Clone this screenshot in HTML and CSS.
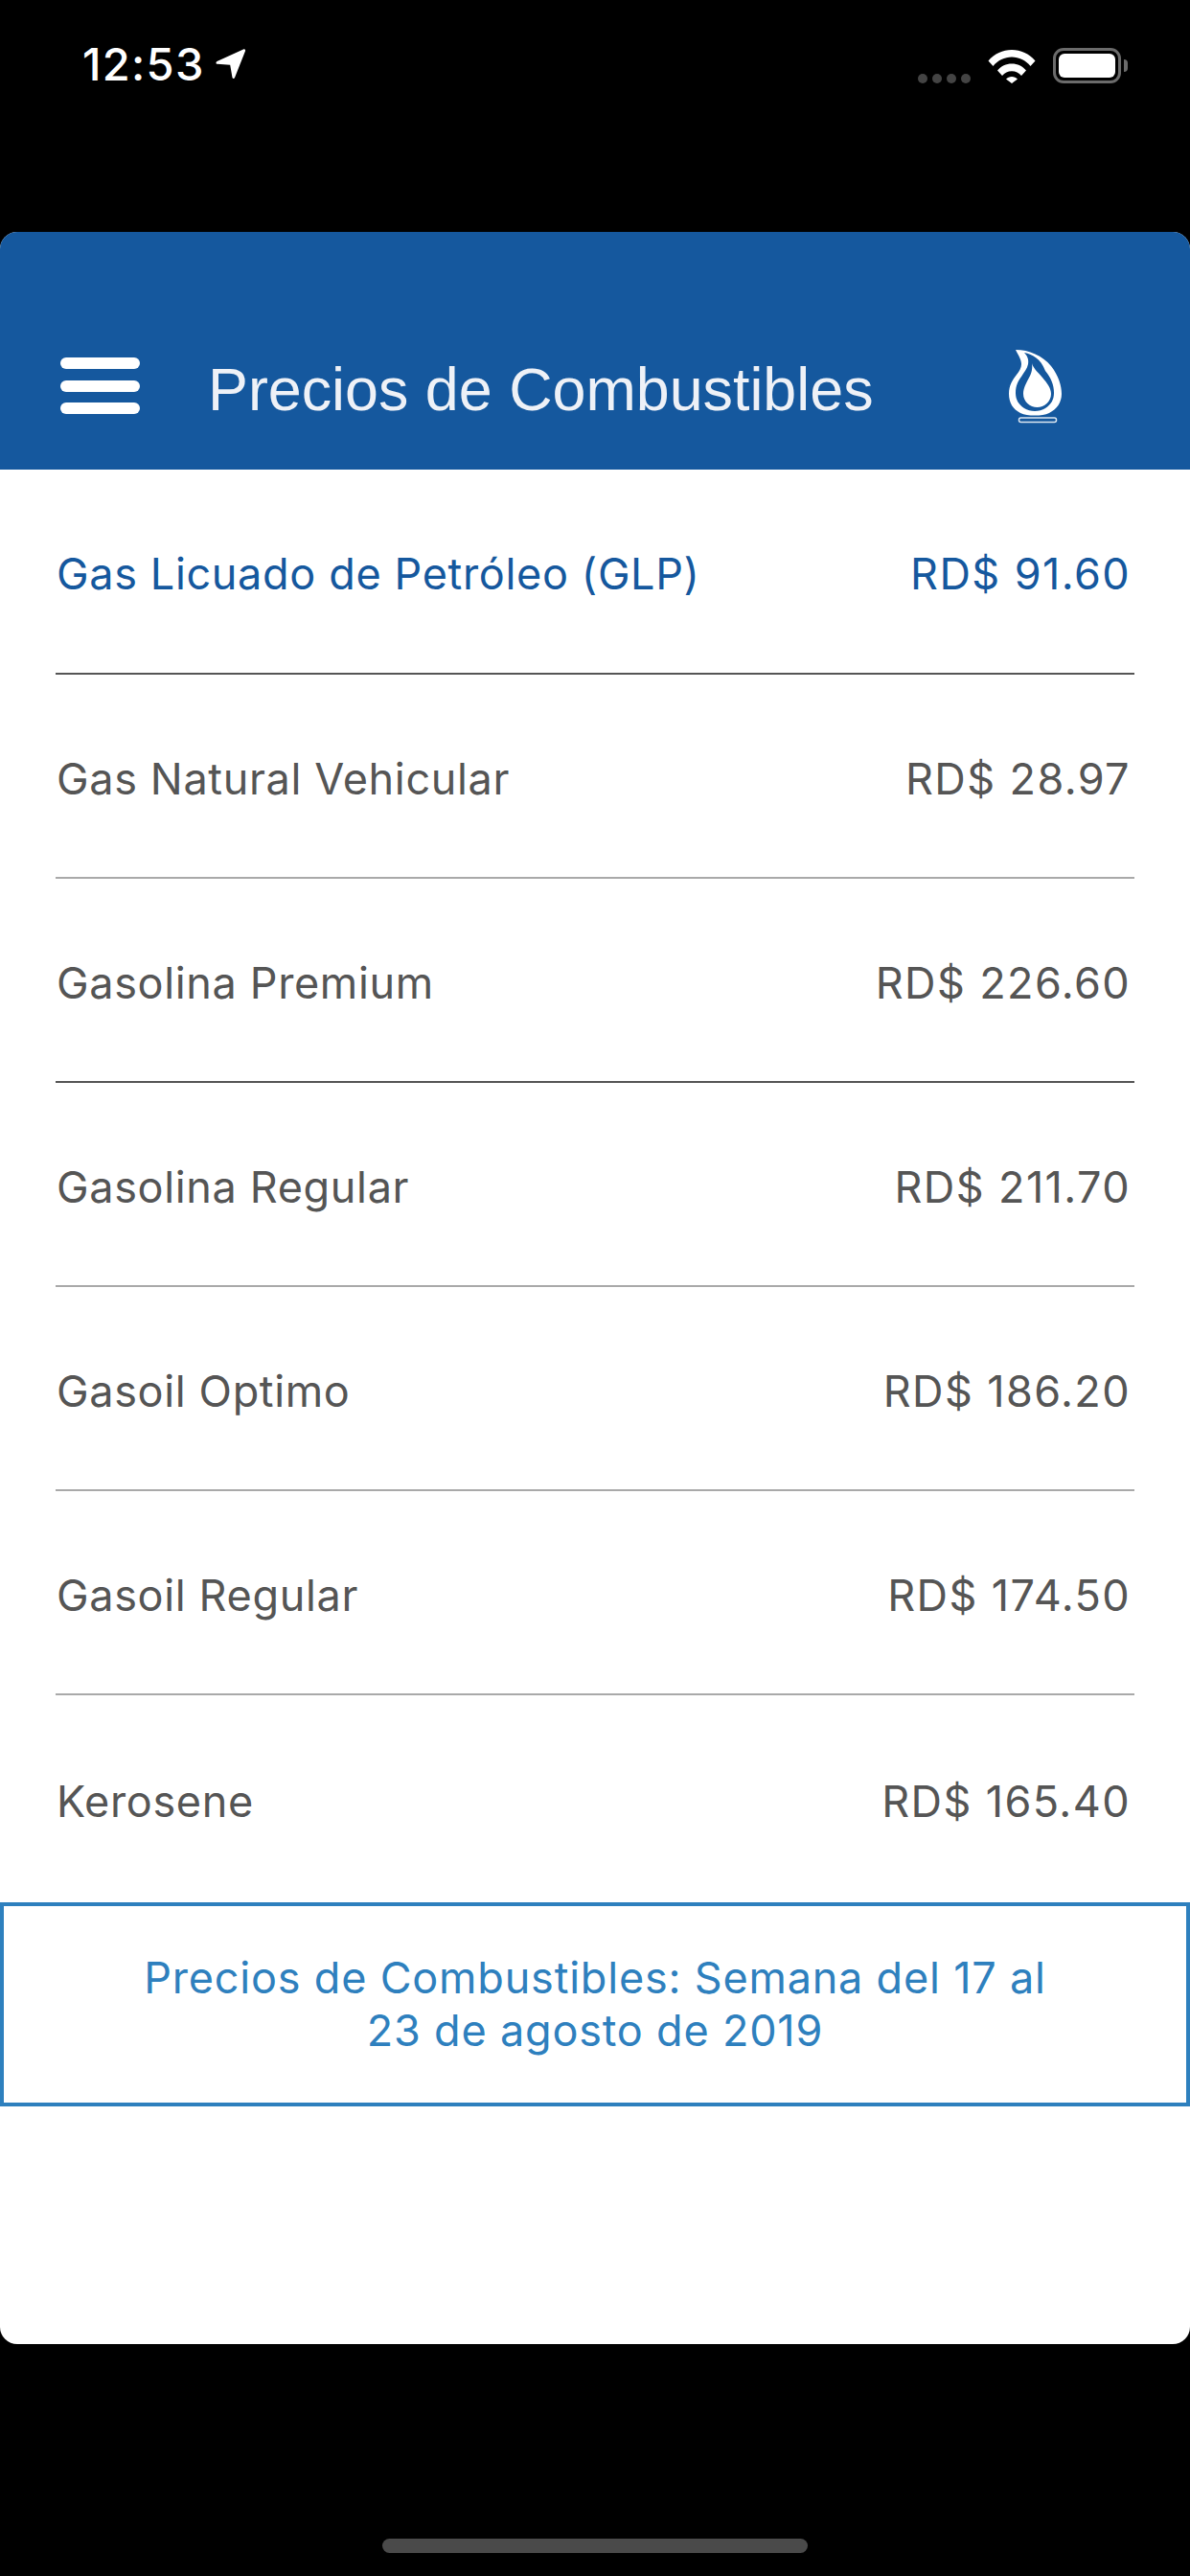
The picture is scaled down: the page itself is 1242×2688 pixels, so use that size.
FILE: index.html
```html
<!DOCTYPE html>
<html lang="es">
<head>
<meta charset="utf-8">
<title>Precios de Combustibles</title>
<link rel="stylesheet" href="styles.css">
</head>
<body>
<div class="phone">
  <div class="status">
    <div class="status-left">
      <span class="time">12:53</span>
      <svg class="loc" viewBox="0 0 32 32"><path d="M1.500 13 29 .5c1.200-.5 2.400.5 2 1.700L20 30c-.6 1.300-2 1.300-2.500 0L15.200 16.800 1.800 15.800c-1.600-.1-1.800-2.100-.3-2.800z" fill="#fff"/></svg>
    </div>
    <div class="status-right">
      <div class="dots"><i></i><i></i><i></i><i></i></div>
      <svg class="wifi" viewBox="0 0 50 36"><path d="M0.500 12.500C7 5 15.500 1 25 1s18 4 24.500 11.500L44.500 18C39.500 12 32.500 8.500 25 8.500S10.500 12 5.500 18z M10 22.500C13.800 18 19 15.500 25 15.500s11.200 2.500 15 7L35 28c-2.500-3-6-4.800-10-4.800S17.500 25 15 28z M19 31.500c1.500-1.600 3.600-2.500 6-2.500s4.500.9 6 2.500L25 36z" fill="#fff"/></svg>
      <div class="battery"><div class="battery-fill"></div></div>
      <div class="nub"></div>
    </div>
  </div>
  <main class="app">
    <header class="bar">
      <div class="menu"><i></i><i></i><i></i></div>
      <h1 class="title">Precios de Combustibles</h1>
      <svg class="flame" viewBox="0 0 60 80">
        <path fill="#fff" fill-rule="evenodd" d="M10 3C24 3 38 9 47 20c8 10 11 21 11 29 0 9-5 16-13 20-4 2-9 2.500-15 2.500S19 71 15 69C7 65 3 58 3 49c0-9 4-15 8-20 3-4 5-7 5-11 0-5-3-9-6-15z M19 6c3 3 5 7 4 12-1 5-4 8-7 13-3 4-6 9-6 17 0 7 3 12 9 16 3 2 7 3 11 3s8-1 11-3c6-4 9-9 9-16 0-8-3-16-9-23C36 12 28 8 19 6z"/>
        <path fill="#fff" d="M27 17c1 5 6 9 11 15 5 6 9 11 9 17 0 8-7 14-14.500 14S18 57 18 49c0-6 3-11 5-15 3-5 5-10 4-17z"/>
        <rect x="13.500" y="74" width="39" height="4.500" rx="2" fill="none" stroke="#fff" stroke-width="1.500" opacity=".85"/>
      </svg>
    </header>
    <ul class="list">
      <li class="row active"><span>Gas Licuado de Petróleo (GLP)</span><span class="price">RD$ 91.60</span></li>
      <li class="row"><span>Gas Natural Vehicular</span><span class="price">RD$ 28.97</span></li>
      <li class="row"><span>Gasolina Premium</span><span class="price">RD$ 226.60</span></li>
      <li class="row"><span>Gasolina Regular</span><span class="price">RD$ 211.70</span></li>
      <li class="row"><span>Gasoil Optimo</span><span class="price">RD$ 186.20</span></li>
      <li class="row"><span>Gasoil Regular</span><span class="price">RD$ 174.50</span></li>
      <li class="row"><span>Kerosene</span><span class="price">RD$ 165.40</span></li>
    </ul>
    <div class="notice">Precios de Combustibles: Semana del 17 al<br>23 de agosto de 2019</div>
  </main>
  <div class="home"></div>
</div>
</body>
</html>
```
FILE: styles.css
```css
* { box-sizing: border-box; margin: 0; padding: 0; }
html, body { background: #000; width: 1242px; height: 2688px; overflow: hidden; }
.phone { width: 1242px; height: 2688px; display: flex; flex-direction: column; background: #000; }
.status { height: 242px; flex: none; display: flex; justify-content: space-between; align-items: flex-start; padding: 43px 65px 0 86px; color: #fff; }
.status-left { display: flex; align-items: center; gap: 11px; height: 48px; }
.time { font: 500 47px/50px Inter, "Liberation Sans", sans-serif; letter-spacing: 1.300px; }
.loc { width: 32px; height: 32px; }
.status-right { display: flex; align-items: center; height: 48px; padding-top: 3px; }
.dots { display: flex; gap: 5px; margin-right: 18px; margin-top: 26px; }
.dots i { width: 10px; height: 10px; border-radius: 50%; background: #444; }
.wifi { width: 50px; height: 36px; margin-right: 18px; }
.battery { width: 71px; height: 37px; border: 3px solid #6b6b6b; border-radius: 11px; padding: 3px; }
.battery-fill { width: 100%; height: 100%; background: #fff; border-radius: 6px; }
.nub { width: 4px; height: 13px; background: #6b6b6b; border-radius: 0 4px 4px 0; margin-left: 3px; }
.app { width: 1242px; height: 2204px; flex: none; background: #fff; border-radius: 18px; overflow: hidden; }
.bar { height: 248px; background: #15589e; display: flex; align-items: flex-start; padding-top: 131px; position: relative; }
.menu { width: 83px; margin-left: 63px; display: flex; flex-direction: column; gap: 11.5px; }
.menu i { display: block; height: 12px; border-radius: 6px; background: #fff; }
.title { font: 400 62.800px/72px "Liberation Sans", Arial, sans-serif; color: #eef1f7; margin-left: 71px; margin-top: -3px; flex: 1; }
.flame { position: absolute; left: 1050px; top: 120px; width: 60px; height: 80px; }
.list { list-style: none; }
.row { height: 213px; margin: 0 58px; padding: 6px 4px 0 1px; display: flex; justify-content: space-between; align-items: center; font: 400 45px/52px Inter, sans-serif; letter-spacing: .65px; color: #555; border-bottom: 2px solid #a9a9a9; }
.row:first-child { height: 214px; }
.row:last-child { border-bottom: 0; height: 216px; }
.row.active { color: #15589e; }
.row:nth-child(1), .row:nth-child(3) { border-bottom-color: #555; }
.price { letter-spacing: 1.400px; }
.notice { height: 213px; border: 4px solid #2e80be; color: #2e80be; text-align: center; font: 400 45px/55px Inter, sans-serif; letter-spacing: .8px; padding-top: 47px; }
.home { width: 444px; height: 15px; border-radius: 8px; background: #4a4a4a; margin: 203px auto 0; }
```
